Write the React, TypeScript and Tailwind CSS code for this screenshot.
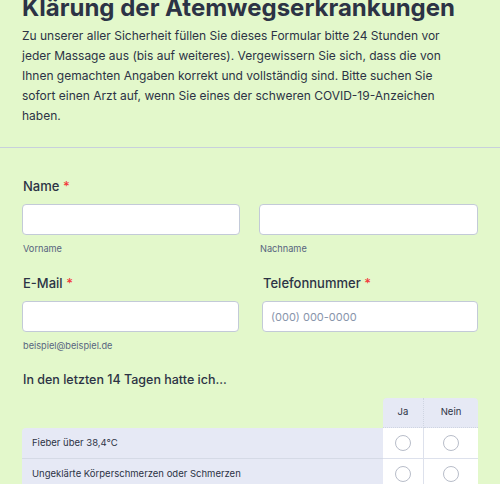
const rows = ['Fieber über 38,4°C', 'Ungeklärte Körperschmerzen oder Schmerzen'];

function Radio() {
  return <span className="block h-[16px] w-[16px] rounded-full border border-[#b8bdc9] bg-white" />;
}

function Field({ label, required, sub, placeholder }: { label?: string; required?: boolean; sub?: string; placeholder?: string }) {
  return (
    <div>
      {label && (
        <div className="mb-[8px] pl-px text-[13px] font-medium leading-[20px]">
          {label} {required && <span className="text-[#f23a3c]">*</span>}
        </div>
      )}
      <input
        className="block h-[31px] w-full rounded-[4px] border border-[#c3cad8] bg-white px-[8px] text-[11px] outline-none placeholder:text-[#8894ab]"
        placeholder={placeholder}
      />
      {sub && <div className="mt-[7px] pl-px text-[9.2px] leading-[14px] text-[#57647e]">{sub}</div>}
    </div>
  );
}

export default function App() {
  return (
    <div className="min-h-screen overflow-hidden bg-[#e3f8cb] font-['Inter',sans-serif] text-[#2c3345]">
      <div className="px-[22px] pb-[21px]">
        <h1 className="-mt-[7px] text-[24px] font-bold leading-[30px]">Klärung der Atemwegserkrankungen</h1>
        <p className="mt-[3px] pr-[10px] text-[12px] leading-[20px]">
          Zu unserer aller Sicherheit füllen Sie dieses Formular bitte 24 Stunden vor jeder Massage aus (bis auf weiteres). Vergewissern Sie sich, dass die von Ihnen gemachten Angaben korrekt und vollständig sind. Bitte suchen Sie sofort einen Arzt auf, wenn Sie eines der schweren COVID-19-Anzeichen haben.
        </p>
      </div>
      <div className="border-t border-[#c8d0dc] px-[22px] pt-[28px]">
        <div className="mb-[8px] pl-px text-[13px] font-medium leading-[20px]">
          Name <span className="text-[#f23a3c]">*</span>
        </div>
        <div className="grid grid-cols-[218px_219px] justify-between">
          <Field sub="Vorname" />
          <Field sub="Nachname" />
        </div>

        <div className="mt-[17px] grid grid-cols-[217px_216px] justify-between">
          <Field label="E-Mail" required sub="beispiel@beispiel.de" />
          <Field label="Telefonnummer" required placeholder="(000) 000-0000" />
        </div>

        <div className="mt-[17px] pl-px text-[12.5px] font-medium leading-[20px]">In den letzten 14 Tagen hatte ich...</div>

        <div className="mt-[8px] grid grid-cols-[361px_41px_54px] text-[9.5px]">
          <div />
          <div className="flex h-[30px] items-center justify-center rounded-tl-[4px] border-r border-b border-dotted border-[#cfd5e2] bg-[#e6e9f5]">Ja</div>
          <div className="flex h-[30px] items-center justify-center rounded-tr-[4px] border-b border-dotted border-[#cfd5e2] bg-[#e6e9f5]">Nein</div>
          {rows.map((r, i) => (
            <div key={r} className="contents">
              <div className={`flex h-[31px] items-center border-b border-[#d5dae6] bg-[#e6e9f5] pl-[10px] ${i === 0 ? 'rounded-tl-[4px]' : ''}`}>
                {r}
              </div>
              <div className="flex h-[31px] items-center justify-center border-r border-b border-[#dde1ec] bg-white">
                <Radio />
              </div>
              <div className="flex h-[31px] items-center justify-center border-b border-[#dde1ec] bg-white">
                <Radio />
              </div>
            </div>
          ))}
        </div>
      </div>
    </div>
  );
}
